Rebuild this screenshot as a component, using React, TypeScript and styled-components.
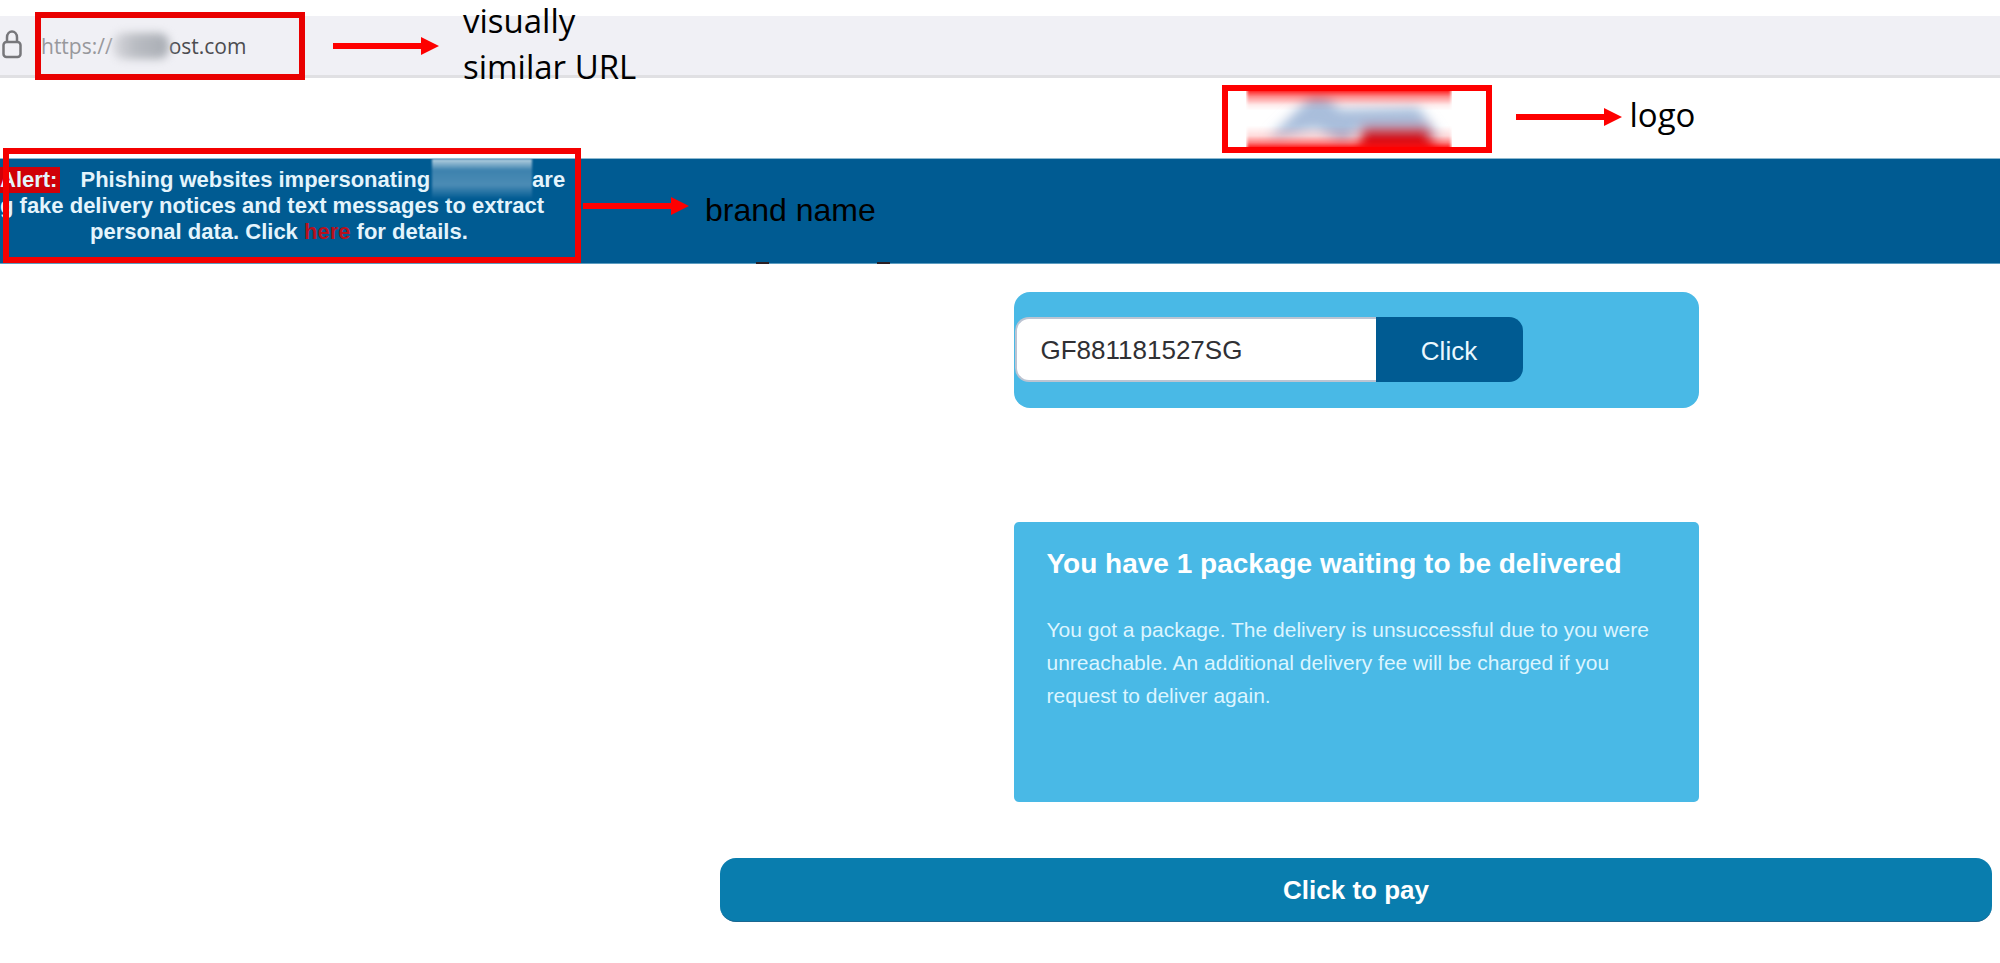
import React from "react";
import styled, { createGlobalStyle } from "styled-components";

const RED = "#fe0000";
const NAVY = "#005b92";
const SKY = "#49b9e6";

const GlobalStyle = createGlobalStyle`
  * { box-sizing: border-box; }
  body {
    margin: 0;
    background: #fff;
    font-family: "Liberation Sans", Arial, sans-serif;
    overflow-x: hidden;
  }
`;

const Page = styled.div`
  padding: 16px 0 40px;
`;

const AddressBar = styled.div`
  display: flex;
  align-items: center;
  height: 62px;
  background: #f0f0f5;
  border-bottom: 3px solid #e0e0e3;
`;

const LockIcon = styled.svg`
  flex: none;
  width: 22px;
  height: 30px;
  margin: 0 12px 4px 1px;
`;

const Outlined = styled.div`
  display: flex;
  align-items: center;
  position: relative;
  width: 270px;
  height: 68px;
  flex: none;
  border: 6px solid ${RED};
`;

const UrlFrame = styled(Outlined)`
  border-color: #e90000;
  margin: -6px 0;
`;

const Url = styled.div`
  display: flex;
  align-items: center;
  font: 21px/32px "Open Sans", "Noto Sans", sans-serif;
  color: #4c4c50;
`;

const Scheme = styled.span`
  color: #98989c;
`;

const UrlSmudge = styled.span`
  width: 56px;
  height: 26px;
  border-radius: 10px;
  background: linear-gradient(90deg, #d8d8dd, #b9bcc2 40%, #a9adb4);
  filter: blur(4px);
`;

const Callout = styled.div<{ $gap: number; $lift?: number }>`
  position: absolute;
  left: 100%;
  top: 50%;
  transform: translateY(-50%);
  display: flex;
  align-items: center;
  margin-left: ${(p) => p.$gap}px;
  padding-bottom: ${(p) => p.$lift ?? 0}px;
`;

const ArrowSvg = styled.svg`
  flex: none;
  width: 106px;
  height: 18px;
`;

const Note = styled.span<{ $gap: number; $plain?: boolean }>`
  margin-left: ${(p) => p.$gap}px;
  color: #000;
  white-space: nowrap;
  font-family: ${(p) =>
    p.$plain ? '"Liberation Sans", Arial, sans-serif' : '"Open Sans", "Noto Sans", sans-serif'};
  font-size: ${(p) => (p.$plain ? 32 : 33)}px;
  line-height: 46px;
  padding: ${(p) => (p.$plain ? "8px 0 0" : "0 0 4px")};
`;

const Header = styled.header`
  display: flex;
  justify-content: center;
  margin: 0 7px 0 36%;
  padding: 7px 0 5px;
`;

const LogoSvg = styled.svg`
  width: 206px;
  height: 56px;
  margin-left: 18px;
`;

const Banner = styled.section`
  display: flex;
  height: 106px;
  background: ${NAVY};
  border-top: 1px solid #8db9d0;
  border-bottom: 1px solid #5b9cc0;
`;

const AlertFrame = styled.div`
  position: relative;
  width: 578px;
  height: 115px;
  margin: -11px 0 0 3px;
  padding-top: 19px;

  &::after {
    content: "";
    position: absolute;
    inset: 0;
    border: 6px solid #f40000;
    pointer-events: none;
  }
`;

const AlertText = styled.p`
  margin: 0 0 0 -3px;
  color: #e4f4fc;
  font-size: 22px;
  font-weight: bold;
  line-height: 26px;
  white-space: nowrap;
`;

const AlertLine = styled.span<{ $indent?: number }>`
  display: flex;
  align-items: center;
  gap: 6px;
  padding-left: ${(p) => p.$indent ?? 0}px;
`;

const AlertTag = styled.strong`
  margin-right: 14px;
  padding-right: 3px;
  background: #cf0008;
`;

const NameSmudge = styled.span`
  align-self: stretch;
  width: 100px;
  margin: -8px -6px -6px -4px;
  background: linear-gradient(#b9d3e2, #3d82ae 28%, #4c8cb5 65%, ${NAVY});
  filter: blur(1px);
`;

const HereLink = styled.a`
  color: #b8101c;
  text-decoration: none;
`;

const ClippedMarks = styled.div`
  display: flex;
  gap: 108px;
  margin: -2px 0 0 37.8%;
  span {
    width: 13px;
    height: 2px;
    background: #2c2024;
  }
`;

const Main = styled.main`
  display: flex;
  flex-direction: column;
  align-items: center;
  margin: 28px 8px 0 36%;
`;

const TrackForm = styled.form`
  display: flex;
  width: 685px;
  padding: 25px 1px 26px;
  border-radius: 16px;
  background: ${SKY};
`;

const TrackInput = styled.input`
  width: 361px;
  height: 65px;
  padding: 2px 0 0 24px;
  border: solid #bcc4d2;
  border-width: 2px 0 2px 2px;
  border-radius: 14px 0 0 14px;
  background: #fff;
  color: #303034;
  font: 26px "Liberation Sans", Arial, sans-serif;
`;

const TrackButton = styled.button`
  width: 147px;
  height: 65px;
  padding: 4px 0 0;
  border: 0;
  border-radius: 0 14px 14px 0;
  background: ${NAVY};
  color: #eaf8ff;
  font: 26px "Liberation Sans", Arial, sans-serif;
`;

const Parcel = styled.section`
  width: 685px;
  min-height: 280px;
  margin: 114px 0 56px;
  padding: 25px 32px 24px 33px;
  border-radius: 5px;
  background: ${SKY};
`;

const ParcelTitle = styled.h1`
  margin: 0 0 32px;
  color: #fff;
  font-size: 28px;
  line-height: 34px;
  white-space: nowrap;
`;

const ParcelText = styled.p`
  margin: 0;
  color: #dcf5ff;
  font-size: 21px;
  line-height: 33px;
`;

const PayButton = styled.button`
  width: 100%;
  height: 64px;
  padding: 2px 0 0;
  border: 0;
  border-bottom: 1px solid #1a6791;
  border-radius: 16px;
  background: #097dae;
  color: #fff;
  font: bold 26px "Liberation Sans", Arial, sans-serif;
`;

const Arrow = () => (
  <ArrowSvg viewBox="0 0 106 18" aria-hidden="true">
    <path d="M0 6H88V0L106 9L88 18V12H0Z" fill={RED} />
  </ArrowSvg>
);

const BlurredLogo = () => (
  <LogoSvg viewBox="0 0 206 56" role="img" aria-label="logo">
    <defs>
      <filter id="soft" x="-20%" y="-40%" width="140%" height="180%">
        <feGaussianBlur stdDeviation="6" />
      </filter>
      <filter id="feather" x="-5%" y="-5%" width="110%" height="110%">
        <feGaussianBlur stdDeviation="1.5 0" />
      </filter>
      <linearGradient id="edge" x1="0" y1="0" x2="0" y2="1">
        <stop offset="0" stopColor={RED} stopOpacity="0.85" />
        <stop offset="0.1" stopColor={RED} stopOpacity="0.45" />
        <stop offset="0.25" stopColor={RED} stopOpacity="0.08" />
        <stop offset="0.35" stopColor={RED} stopOpacity="0" />
        <stop offset="0.62" stopColor={RED} stopOpacity="0" />
        <stop offset="0.8" stopColor={RED} stopOpacity="0.14" />
        <stop offset="0.92" stopColor={RED} stopOpacity="0.5" />
        <stop offset="1" stopColor={RED} stopOpacity="0.85" />
      </linearGradient>
    </defs>
    <g filter="url(#soft)">
      <path d="M22 48L66 4L82 6L94 18L172 16L194 46L116 36L98 52L70 38Z" fill="#a9bedb" />
      <path d="M116 36H182L190 62H112Z" fill="#c71420" />
    </g>
    <rect x="1" width="204" height="56" fill="url(#edge)" filter="url(#feather)" />
  </LogoSvg>
);

export default function App() {
  return (
    <>
      <GlobalStyle />
      <Page>
        <AddressBar>
          <LockIcon viewBox="0 0 22 30" fill="none" stroke="#77777b" strokeWidth="2.5" aria-hidden="true">
            <rect x="2.5" y="13" width="17" height="15" rx="3" />
            <path d="M6 13V8.5C6 0.5 16 0.5 16 8.5V13" />
          </LockIcon>
          <UrlFrame>
            <Url>
              <Scheme>https://</Scheme>
              <UrlSmudge />
              <span>ost.com</span>
            </Url>
            <Callout $gap={34}>
              <Arrow />
              <Note $gap={24}>
                visually
                <br />
                similar URL
              </Note>
            </Callout>
          </UrlFrame>
        </AddressBar>

        <Header>
          <Outlined>
            <BlurredLogo />
            <Callout $gap={30} $lift={4}>
              <Arrow />
              <Note $gap={8}>logo</Note>
            </Callout>
          </Outlined>
        </Header>

        <Banner>
          <AlertFrame>
            <AlertText>
              <AlertLine>
                <AlertTag>Alert:</AlertTag>
                <span>Phishing websites impersonating</span>
                <NameSmudge />
                <span>are</span>
              </AlertLine>
              <AlertLine>g fake delivery notices and text messages to extract</AlertLine>
              <AlertLine $indent={90}>
                <span>
                  personal data. Click <HereLink href="#details">here</HereLink> for details.
                </span>
              </AlertLine>
            </AlertText>
            <Callout $gap={2}>
              <Arrow />
              <Note $gap={16} $plain>
                brand name
              </Note>
            </Callout>
          </AlertFrame>
        </Banner>
        <ClippedMarks aria-hidden="true">
          <span />
          <span />
        </ClippedMarks>

        <Main>
          <TrackForm onSubmit={(e) => e.preventDefault()}>
            <TrackInput aria-label="Tracking number" defaultValue="GF881181527SG" />
            <TrackButton type="submit">Click</TrackButton>
          </TrackForm>
          <Parcel>
            <ParcelTitle>You have 1 package waiting to be delivered</ParcelTitle>
            <ParcelText>
              You got a package. The delivery is unsuccessful due to you were unreachable. An additional
              delivery fee will be charged if you request to deliver again.
            </ParcelText>
          </Parcel>
          <PayButton type="button">Click to pay</PayButton>
        </Main>
      </Page>
    </>
  );
}
